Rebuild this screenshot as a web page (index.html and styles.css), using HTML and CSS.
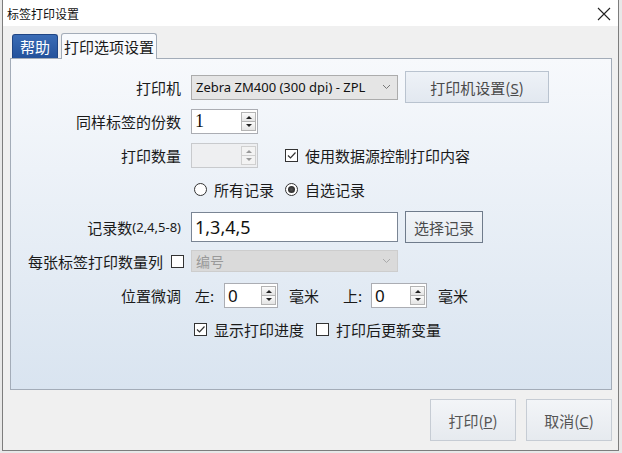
FILE: index.html
```html
<!DOCTYPE html>
<html>
<head>
    <meta charset="utf-8">
    <title>标签打印设置</title>
    <link rel="stylesheet" href="styles.css">
</head>
<body>
    <div class="window">
        <div class="titlebar">
            <span class="title">标签打印设置</span>
            <svg class="close" width="14" height="14" viewBox="0 0 14 14">
                <path d="M1 1 L13 13 M13 1 L1 13" stroke="#222" stroke-width="1.1" fill="none"/>
            </svg>
        </div>

        <div class="tabs">
            <div class="tab tab-help">帮助</div>
            <div class="tab tab-active">打印选项设置</div>
        </div>

        <div class="panel">
            <!-- printer -->
            <div class="row">
                <span class="row-label">打印机</span>
                <div class="select">
                    <span>Zebra ZM400 (300 dpi) - ZPL</span>
                    <svg class="chevron" width="9" height="6" viewBox="0 0 9 6"><path d="M1 1 L4.5 4.5 L8 1" stroke="#777" fill="none"/></svg>
                </div>
                <button class="btn btn-printer">打印机设置(<u>S</u>)</button>
            </div>

            <div class="row">
                <span class="row-label">同样标签的份数</span>
                <div class="spin">
                    <span class="spin-value serif">1</span>
                    <div class="spin-btns">
                        <span class="spin-up"></span>
                        <span class="spin-down"></span>
                    </div>
                </div>
            </div>

            <div class="row">
                <span class="row-label">打印数量</span>
                <div class="spin disabled">
                    <span class="spin-value"></span>
                    <div class="spin-btns">
                        <span class="spin-up"></span>
                        <span class="spin-down"></span>
                    </div>
                </div>
                <span class="check-item gap-datasource">
                    <span class="checkbox checked"><svg width="11" height="11" viewBox="0 0 11 11"><path d="M2 5.5 L4.5 8 L9.5 2.5" stroke="#333" stroke-width="1.2" fill="none"/></svg></span>
                    使用数据源控制打印内容
                </span>
            </div>

            <div class="row">
                <span class="row-label"></span>
                <span class="check-item gap-first">
                    <span class="radio"></span>
                    所有记录
                </span>
                <span class="check-item gap-second">
                    <span class="radio selected"><span class="dot"></span></span>
                    自选记录
                </span>
            </div>

            <div class="row row-records">
                <span class="row-label">记录数<small>(2,4,5-8)</small></span>
                <div class="text-input">1,3,4,5</div>
                <button class="btn btn-pick">选择记录</button>
            </div>

            <div class="row">
                <span class="row-label">
                    每张标签打印数量列
                    <span class="checkbox label-check"></span>
                </span>
                <div class="select select-disabled">
                    <span>编号</span>
                    <svg class="chevron" width="9" height="6" viewBox="0 0 9 6"><path d="M1 1 L4.5 4.5 L8 1" stroke="#aaa" fill="none"/></svg>
                </div>
            </div>

            <div class="row">
                <span class="row-label">位置微调</span>
                <span class="offset-label first">左:</span>
                <div class="spin spin-small">
                    <span class="spin-value">0</span>
                    <div class="spin-btns">
                        <span class="spin-up"></span>
                        <span class="spin-down"></span>
                    </div>
                </div>
                <span class="unit">毫米</span>
                <span class="offset-label second">上:</span>
                <div class="spin spin-small wide">
                    <span class="spin-value">0</span>
                    <div class="spin-btns">
                        <span class="spin-up"></span>
                        <span class="spin-down"></span>
                    </div>
                </div>
                <span class="unit">毫米</span>
            </div>

            <div class="row">
                <span class="row-label"></span>
                <span class="check-item gap-first">
                    <span class="checkbox checked"><svg width="11" height="11" viewBox="0 0 11 11"><path d="M2 5.5 L4.5 8 L9.5 2.5" stroke="#333" stroke-width="1.2" fill="none"/></svg></span>
                    显示打印进度
                </span>
                <span class="check-item gap-update">
                    <span class="checkbox"></span>
                    打印后更新变量
                </span>
            </div>
        </div>

        <div class="footer">
            <button class="btn btn-foot">打印(<u>P</u>)</button>
            <button class="btn btn-foot">取消(<u>C</u>)</button>
        </div>
    </div>
</body>
</html>
```

FILE: styles.css
```css
body {
    margin: 0;
    background-color: #e8e8e8;
    font-family: "Noto Sans", "Noto Sans CJK SC", sans-serif;
    color: #1a1a1a;
}

.window {
    position: relative;
    margin-left: 2px;
    width: 617px;
    height: 451px;
    box-sizing: border-box;
    background-color: #f0f0f0;
    border: 1px solid #7d7d7d;
    border-top: none;
}

.titlebar {
    height: 26px;
    background-color: #fff;
    display: flex;
    align-items: center;
    justify-content: space-between;
    padding: 0 7px 0 4px;
}

.title {
    font-size: 12px;
    font-family: "Noto Sans CJK SC", sans-serif;
    color: #111;
}

.close {
    margin-top: 1px;
}

.tabs {
    display: flex;
    align-items: flex-end;
    margin-top: 7px;
    padding-left: 9px;
    height: 25px;
}

.tab {
    box-sizing: border-box;
    height: 25px;
    font-size: 15px;
    font-family: "Noto Sans CJK SC", sans-serif;
    display: flex;
    align-items: center;
    justify-content: center;
    border-radius: 3px 3px 0 0;
}

.tab-help {
    width: 46px;
    height: 24px;
    color: #fff;
    background: linear-gradient(#3a6cb6, #24529b);
    border: 1px solid #1f4584;
    border-bottom: none;
}

.tab-active {
    width: 96px;
    margin-left: 3px;
    background-color: #f8fafd;
    border: 1px solid #a3acb8;
    border-bottom: none;
    position: relative;
    z-index: 1;
    margin-bottom: -1px;
    height: 26px;
}

.panel {
    margin: 0 6px 0 7px;
    height: 332px;
    box-sizing: border-box;
    border: 1px solid #a3acb8;
    background: linear-gradient(#f7f9fc, #d9e4f0);
    padding-top: 11px;
}

.row {
    display: flex;
    align-items: center;
    height: 34px;
    font-size: 15px;
    font-family: "Noto Sans CJK SC", sans-serif;
}

.row-records {
    margin-top: 4px;
}

.row-label {
    width: 180px;
    flex: none;
    box-sizing: border-box;
    padding-right: 10px;
    text-align: right;
    display: flex;
    align-items: center;
    justify-content: flex-end;
}

.row-label small {
    font-family: "Noto Sans", sans-serif;
    font-size: 13px;
}

.select {
    width: 207px;
    height: 25px;
    box-sizing: border-box;
    border: 1px solid #acacac;
    background-color: #e5e5e5;
    display: flex;
    align-items: center;
    justify-content: space-between;
    padding: 0 6px 0 4px;
    font-family: "Noto Sans", sans-serif;
    font-size: 13px;
    color: #111;
}

.select-disabled {
    height: 22px;
    background-color: #dadada;
    border-color: #cdcdcd;
    color: #9a9a9a;
    font-family: "Noto Sans CJK SC", sans-serif;
    font-size: 14px;
}

.btn {
    box-sizing: border-box;
    font-family: "Noto Sans CJK SC", sans-serif;
    font-size: 15px;
    color: #4a4a4a;
    background: linear-gradient(#eef2f7, #e2e8f0);
    border: 1px solid #b9c3cf;
    padding: 0;
}

.btn u {
    font-family: "Noto Sans", sans-serif;
}

.btn-printer {
    width: 144px;
    height: 32px;
    margin-left: 7px;
}

.btn-pick {
    width: 78px;
    height: 32px;
    margin-left: 7px;
    border-color: #6f7b8b;
    background: linear-gradient(#f1f4f8, #e6ecf2);
}

.spin {
    width: 67px;
    height: 25px;
    box-sizing: border-box;
    border: 1px solid #abadb3;
    background-color: #fff;
    display: flex;
}

.spin.disabled {
    background-color: #eeeff1;
    border-color: #c8cacd;
}

.spin-small {
    width: 54px;
}

.spin-small.wide {
    width: 56px;
}

.spin-value {
    flex: 1;
    padding-left: 3px;
    font-family: "Noto Sans", sans-serif;
    font-size: 17px;
    line-height: 23px;
    color: #111;
}

.spin-value.serif {
    font-family: "Liberation Serif", serif;
    font-size: 18px;
}

.spin-btns {
    width: 15px;
    margin: 2px 1px 2px 0;
    display: flex;
    flex-direction: column;
}

.spin-up,
.spin-down {
    flex: 1;
    box-sizing: border-box;
    border: 1px solid #b4b4b4;
    background: linear-gradient(#fbfbfb, #e4e4e4);
    position: relative;
}

.spin-down {
    border-top: none;
}

.spin-up::after,
.spin-down::after {
    content: "";
    position: absolute;
    left: 4px;
    top: 3px;
    border-left: 3px solid transparent;
    border-right: 3px solid transparent;
}

.spin-up::after {
    border-bottom: 3px solid #222;
}

.spin-down::after {
    top: 2px;
    border-top: 3px solid #222;
}

.spin.disabled .spin-up,
.spin.disabled .spin-down {
    border-color: #d0d0d0;
    background: #f3f3f3;
}

.spin.disabled .spin-up::after {
    border-bottom-color: #999;
}

.spin.disabled .spin-down::after {
    border-top-color: #999;
}

.check-item {
    display: inline-flex;
    align-items: center;
    gap: 7px;
}

.gap-datasource {
    margin-left: 27px;
}

.gap-first {
    margin-left: 3px;
}

.gap-second {
    margin-left: 11px;
}

.gap-update {
    margin-left: 12px;
}

.checkbox {
    width: 13px;
    height: 13px;
    box-sizing: border-box;
    border: 1px solid #333;
    background-color: #fff;
    display: inline-flex;
    align-items: center;
    justify-content: center;
}

.label-check {
    margin-left: 8px;
    margin-right: -3px;
}

.radio {
    width: 13px;
    height: 13px;
    box-sizing: border-box;
    border: 1px solid #333;
    border-radius: 50%;
    background-color: #fff;
    display: inline-flex;
    align-items: center;
    justify-content: center;
}

.radio .dot {
    width: 7px;
    height: 7px;
    border-radius: 50%;
    background: radial-gradient(#555, #1a1a1a);
}

.text-input {
    width: 207px;
    height: 30px;
    box-sizing: border-box;
    border: 1px solid #7a8594;
    background-color: #fff;
    padding-left: 3px;
    font-family: "Noto Sans", sans-serif;
    font-size: 18px;
    line-height: 28px;
    color: #111;
}

.offset-label.first {
    margin-left: 4px;
    width: 29px;
}

.offset-label.second {
    margin-left: 24px;
    width: 28px;
}

.unit {
    margin-left: 11px;
}

.footer {
    display: flex;
    justify-content: flex-end;
    gap: 10px;
    margin-top: 9px;
    padding-right: 6px;
}

.btn-foot {
    width: 86px;
    height: 42px;
    background: linear-gradient(#f3f5f8, #e6eaef);
    border-color: #c6ccd4;
    color: #555;
}
```
